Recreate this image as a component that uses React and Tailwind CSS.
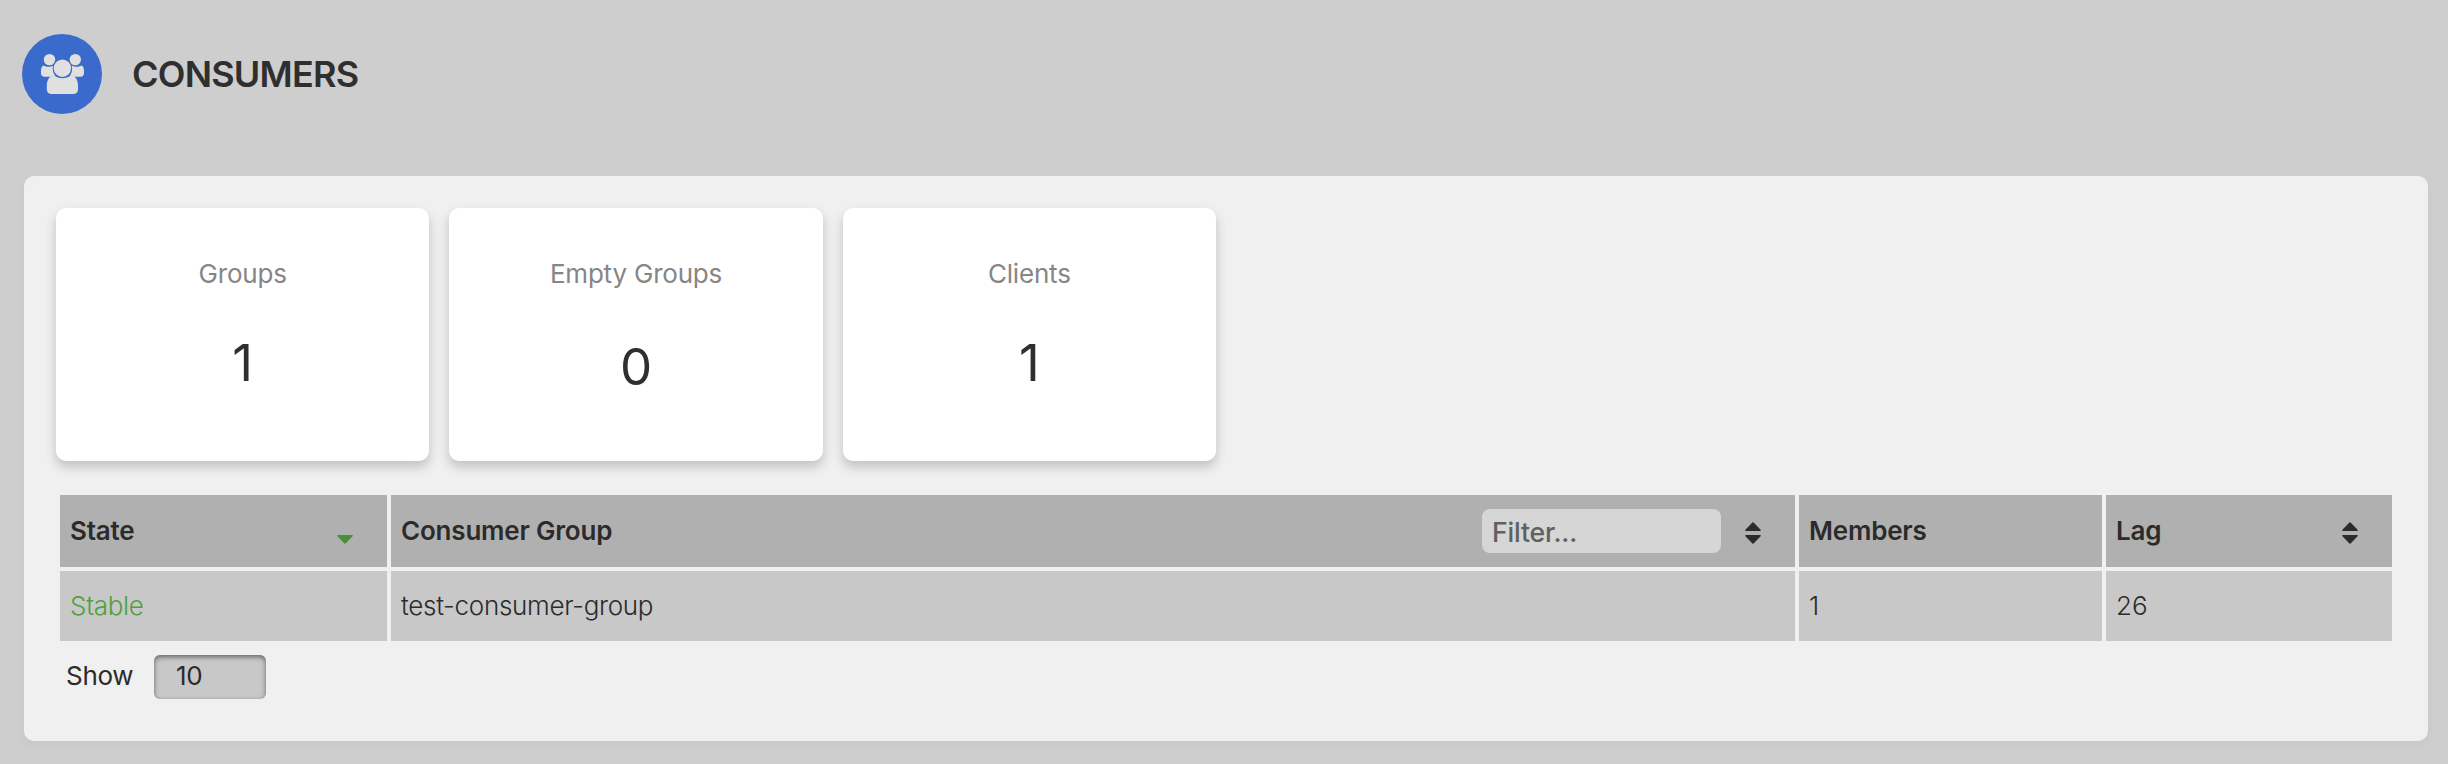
import React from "react";

const stats = [
  { label: "Groups", value: "1", valueClass: "mt-[42px]" },
  { label: "Empty Groups", value: "0", valueClass: "mt-[46px]" },
  { label: "Clients", value: "1", valueClass: "mt-[42px]" },
];

function GroupIcon() {
  return (
    <svg width="80" height="80" viewBox="0 0 80 80" fill="#e0e0e0">
      <circle cx="27.5" cy="25.6" r="5.7" />
      <circle cx="53.3" cy="25.6" r="5.7" />
      <path d="M21.8 31.4C25 33.4 28.500 33.200 31.600 31.600C30.200 35.600 31 39.200 33.200 41.400C31.600 41.600 30.400 42.300 29.600 42.700H22.500C20.200 42.700 19 41.400 19 39V37C19 34 20 31.800 21.800 31.400Z" />
      <path d="M59.200 31.400C56 33.400 52.500 33.200 49.400 31.600C50.800 35.600 50 39.200 47.800 41.400C49.400 41.600 50.600 42.300 51.400 42.700H58.500C60.800 42.700 62 41.400 62 39V37C62 34 61 31.800 59.200 31.400Z" />
      <circle cx="40.400" cy="34.200" r="9.700" fill="#3a6acb" />
      <circle cx="40.400" cy="34.200" r="8.700" />
      <path d="M32.300 41.500C37 45.200 44 45.200 48.700 41.500C53.500 41.700 56 46 56 51.500V55C56 58.200 54.200 60 51 60H29.800C26.600 60 24.800 58.200 24.800 55V51.500C24.800 46 27.500 41.700 32.300 41.500Z" />
    </svg>
  );
}

function SortIcon({ active = false }) {
  return (
    <svg width="16" height="22" viewBox="0 0 16 22" className="mt-1 shrink-0">
      {!active && (
        <path d="M7.400.400a.9.9 0 0 1 1.200 0l7 7.300c.5.5.2 1.300-.5 1.300H.9c-.7 0-1-.8-.5-1.300Z" fill="#2b2b2b" />
      )}
      <path
        d="M7.400 21.600a.9.9 0 0 0 1.200 0l7-7.300c.5-.5.2-1.300-.5-1.300H.9c-.7 0-1 .8-.5 1.300Z"
        fill={active ? "#4a8f3c" : "#2b2b2b"}
      />
    </svg>
  );
}

export default function App() {
  return (
    <div className="h-[764px] w-[2448px] overflow-hidden bg-[#cecece] font-['Inter',sans-serif] text-[26px] leading-[32px] text-[#2b2b2b]">
      <header className="flex h-[176px] items-start gap-[30px] pt-[34px] pl-[22px]">
        <div className="size-20 rounded-full bg-[#3a6acb]">
          <GroupIcon />
        </div>
        <h1 className="pt-[18px] text-[36px] leading-[44px] font-semibold tracking-[-0.77px] text-[#2f2f2f]">CONSUMERS</h1>
      </header>

      <main className="mx-6 mr-5 h-[565px] rounded-[10px] bg-[#f0f0f0] pt-8 pl-8 shadow-[0_4px_12px_rgba(0,0,0,0.03)]">
        <section className="grid w-[1160px] grid-cols-3 gap-5">
          {stats.map((s) => (
            <div
              key={s.label}
              className="flex h-[253px] flex-col items-center rounded-[10px] bg-white pt-[50px] shadow-[0_6px_12px_rgba(0,0,0,0.2)]"
            >
              <div className="tracking-[-0.2px] text-[#868686]">{s.label}</div>
              <div className={`text-[51px] leading-[62px] font-normal text-[#2f2f2f] ${s.valueClass}`}>{s.value}</div>
            </div>
          ))}
        </section>

        <table className="mt-[30px] w-[2340px] table-fixed border-separate border-spacing-1 text-left">
          <colgroup>
            <col className="w-[327px]" />
            <col className="w-[1404px]" />
            <col className="w-[303px]" />
            <col className="w-[286px]" />
          </colgroup>
          <thead>
            <tr className="h-[72px] bg-[#b0b0b0] tracking-[-0.2px]">
              <th className="p-0 pl-2.5 font-semibold">
                <div className="flex items-center justify-between pr-[34px]">
                  State <SortIcon active />
                </div>
              </th>
              <th className="p-0 pl-2.5 font-semibold">
                <div className="flex items-center pr-[34px]">
                  <span className="flex-1">Consumer Group</span>
                  <input
                    placeholder="Filter..."
                    className="mr-6 h-11 w-[239px] rounded-lg bg-[#d6d6d6] px-2.5 pt-px text-[26.67px] font-medium placeholder:text-[#606060]"
                  />
                  <SortIcon />
                </div>
              </th>
              <th className="p-0 pl-2.5 font-semibold">Members</th>
              <th className="p-0 pl-2.5 font-semibold">
                <div className="flex items-center justify-between pr-[34px]">
                  Lag <SortIcon />
                </div>
              </th>
            </tr>
          </thead>
          <tbody>
            <tr className="h-[70px] bg-[#c8c8c8] font-light tracking-[-0.3px]">
              <td className="p-0 pl-2.5 text-[#50a040]">Stable</td>
              <td className="p-0 pl-2.5">test-consumer-group</td>
              <td className="p-0 pl-2.5">1</td>
              <td className="p-0 pl-2.5 tracking-normal">26</td>
            </tr>
          </tbody>
        </table>

        <div className="mt-2.5 flex items-start pl-2.5 font-normal tracking-[-0.3px]">
          <span className="w-[88px] pt-[5px]">Show</span>
          <div className="h-11 w-28 rounded-md bg-[#c8c8c8] pt-[5px] pl-[22px] shadow-[inset_0_2px_5px_rgba(0,0,0,0.5)]">10</div>
        </div>
      </main>
    </div>
  );
}
